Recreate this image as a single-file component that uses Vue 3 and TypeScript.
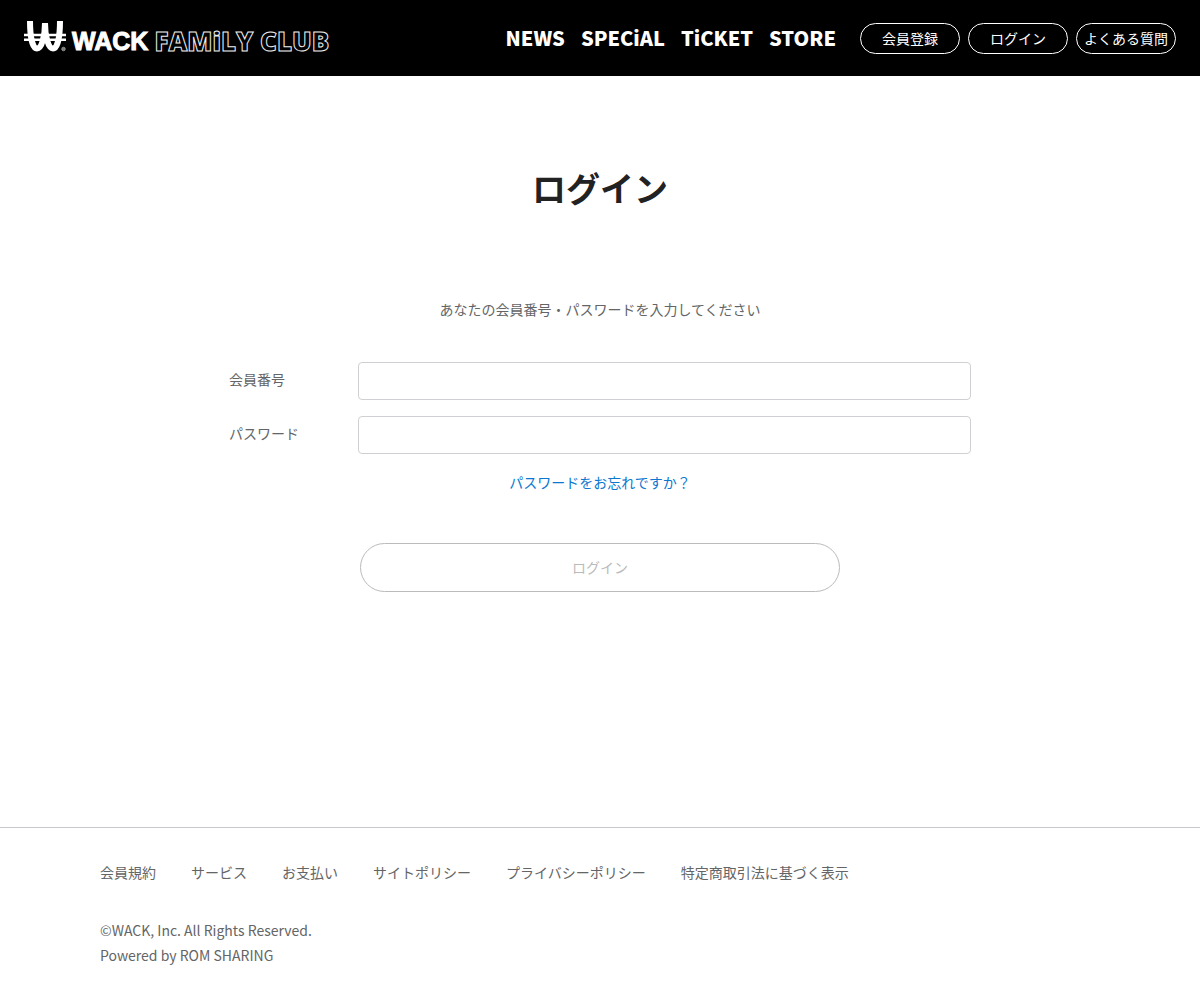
<script setup lang="ts">
import { ref } from 'vue'

interface NavLink {
  label: string
  href: string
}

const mainLinks: NavLink[] = [
  { label: 'NEWS', href: '#news' },
  { label: 'SPECiAL', href: '#special' },
  { label: 'TiCKET', href: '#ticket' },
  { label: 'STORE', href: '#store' },
]

const accountLinks: NavLink[] = [
  { label: '会員登録', href: '#register' },
  { label: 'ログイン', href: '#login' },
  { label: 'よくある質問', href: '#faq' },
]

const footerLinks: NavLink[] = [
  { label: '会員規約', href: '#terms' },
  { label: 'サービス', href: '#service' },
  { label: 'お支払い', href: '#payment' },
  { label: 'サイトポリシー', href: '#site-policy' },
  { label: 'プライバシーポリシー', href: '#privacy' },
  { label: '特定商取引法に基づく表示', href: '#law' },
]

const memberNumber = ref('')
const password = ref('')
</script>

<template>
  <div class="page">
    <header class="header">
      <a class="logo" href="#top" aria-label="WACK FAMiLY CLUB">
        <svg class="logo-mark" viewBox="0 0 42 34" width="42" height="34" aria-hidden="true">
          <g fill="none" stroke="#fff">
            <path stroke-width="2.500" d="M0 14H42M0 18.800H42" />
            <path stroke-width="6" d="M6 0C6 14 8 27.500 13 27.500C18 27.500 21 14 21 2C21 14 24 27.500 29 27.500C34 27.500 36 14 36 0" />
          </g>
          <circle cx="39.500" cy="28" r="1.800" fill="#777" stroke="#bbb" stroke-width=".6" />
        </svg>
        <span class="logo-name">WACK</span>
        <span class="logo-club">FAMiLY CLUB</span>
      </a>
      <nav class="main-nav">
        <a v-for="link in mainLinks" :key="link.label" :href="link.href">{{ link.label }}</a>
      </nav>
      <nav class="account-nav">
        <a v-for="link in accountLinks" :key="link.label" :href="link.href">{{ link.label }}</a>
      </nav>
    </header>

    <main class="main">
      <h1>ログイン</h1>
      <form class="form" @submit.prevent>
        <p class="lead">あなたの会員番号・パスワードを入力してください</p>
        <div class="field">
          <label for="member-number">会員番号</label>
          <input id="member-number" v-model="memberNumber" type="text" />
        </div>
        <div class="field">
          <label for="password">パスワード</label>
          <input id="password" v-model="password" type="password" />
        </div>
        <a class="forgot" href="#forgot">パスワードをお忘れですか？</a>
        <button class="submit" type="submit" :disabled="!memberNumber || !password">ログイン</button>
      </form>
    </main>

    <footer class="footer">
      <nav class="footer-nav">
        <a v-for="link in footerLinks" :key="link.label" :href="link.href">{{ link.label }}</a>
      </nav>
      <p>©WACK, Inc. All Rights Reserved.</p>
      <p>Powered by ROM SHARING</p>
    </footer>
  </div>
</template>

<style>
body {
  margin: 0;
  background: #fff;
}
</style>

<style scoped>
.page {
  display: flex;
  flex-direction: column;
  min-height: 100vh;
  color: #636566;
  font-family: "Noto Sans CJK JP", sans-serif;
  font-size: 14px;
  line-height: 25px;
}

a {
  color: inherit;
  text-decoration: none;
}

p {
  margin: 0;
}

.header {
  display: flex;
  align-items: center;
  box-sizing: border-box;
  height: 76px;
  padding: 0 24px;
  background: #000;
  color: #fff;
}

.logo {
  display: flex;
  align-items: center;
  gap: 6px;
  margin-right: auto;
  white-space: nowrap;
}

.logo-name,
.logo-club {
  padding-top: 7px;
}

.logo-name {
  font-family: "Liberation Sans", sans-serif;
  font-size: 25px;
  font-weight: 700;
  -webkit-text-stroke: 1px #fff;
}

.logo-club {
  color: #000;
  font-family: "Open Sans", sans-serif;
  font-size: 26px;
  font-weight: 800;
  -webkit-text-stroke: 1px #eee;
}

.main-nav {
  display: flex;
  gap: 16px;
  margin-right: 24px;
  padding-bottom: 2px;
  font-size: 20px;
  font-weight: 900;
}

.account-nav {
  display: flex;
  gap: 8px;
}

.account-nav a {
  box-sizing: border-box;
  width: 100px;
  height: 31px;
  border: 1px solid #fff;
  border-radius: 16px;
  line-height: 29px;
  text-align: center;
  white-space: nowrap;
}

.main {
  flex: 1;
  padding: 87px 24px 64px;
}

h1 {
  margin: 0 0 85px;
  color: #222;
  font-size: 34px;
  font-weight: 700;
  line-height: 49px;
  text-align: center;
}

.form {
  display: flex;
  flex-direction: column;
  max-width: 742px;
  margin: 0 auto;
}

.lead {
  margin-bottom: 40px;
  text-align: center;
}

.field {
  display: flex;
  margin-bottom: 16px;
}

.field label {
  width: 129px;
  line-height: 34px;
}

.field input {
  flex: 1;
  box-sizing: border-box;
  min-width: 0;
  height: 38px;
  padding: 6px 12px;
  border: 1px solid #ced0d4;
  border-radius: 4px;
  background: #fff;
  font: inherit;
}

.forgot {
  align-self: center;
  color: #0b78d0;
}

.submit {
  align-self: center;
  width: 100%;
  max-width: 480px;
  height: 49px;
  margin-top: 48px;
  border: 1px solid #bbb;
  border-radius: 25px;
  background: #fff;
  color: #bbb;
  font: inherit;
}

.footer {
  padding: 32px 100px;
  border-top: 1px solid #c8c8cc;
}

.footer-nav {
  display: flex;
  flex-wrap: wrap;
  gap: 8px 35px;
  margin-bottom: 33px;
}
</style>
